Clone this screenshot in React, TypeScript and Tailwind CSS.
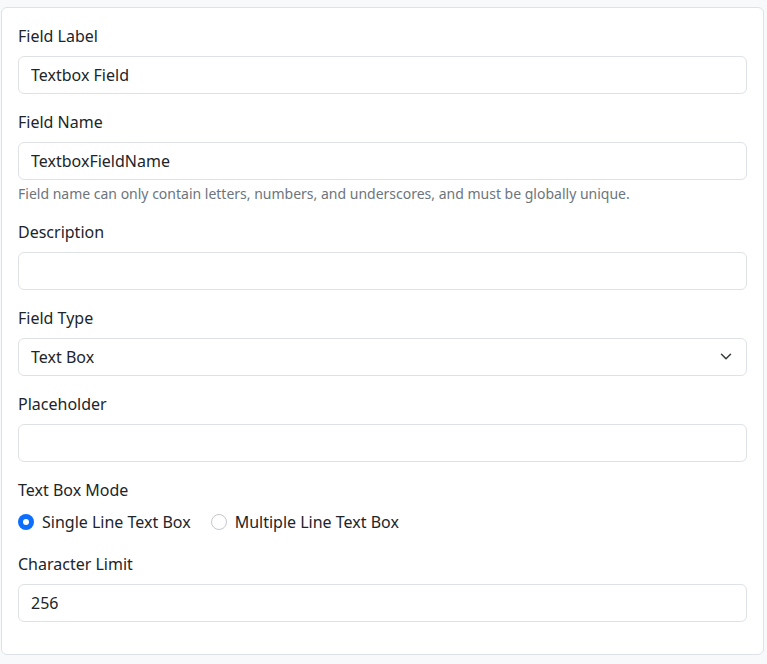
import React, { useState } from 'react';

const inputCls =
  'block w-full h-[38px] px-3 rounded-md border border-[#dee2e6] bg-white text-base leading-6 text-[#212529] outline-none';

const Label: React.FC<{ children: React.ReactNode }> = ({ children }) => (
  <label className="block mb-2 text-base leading-6 text-[#212529]">{children}</label>
);

export default function App() {
  const [mode, setMode] = useState('single');

  return (
    <div
      className="min-h-screen bg-[#f8f9fa] pt-[7px] pl-px pr-[3px] pb-2"
      style={{ fontFamily: '"Noto Sans", "Open Sans", sans-serif' }}
    >
      <div className="bg-white border border-[#dee2e6] rounded-md p-4">
        {/* Field Label */}
        <div className="mb-4">
          <Label>Field Label</Label>
          <input className={inputCls} defaultValue="Textbox Field" />
        </div>

        {/* Field Name */}
        <div className="mb-4">
          <Label>Field Name</Label>
          <input className={inputCls} defaultValue="TextboxFieldName" />
          <div className="mt-1 text-sm leading-5 text-[#6c757d]">
            Field name can only contain letters, numbers, and underscores, and must be globally unique.
          </div>
        </div>

        {/* Description */}
        <div className="mb-4">
          <Label>Description</Label>
          <input className={inputCls} defaultValue="" />
        </div>

        {/* Field Type */}
        <div className="mb-4">
          <Label>Field Type</Label>
          <div className={`${inputCls} flex items-center justify-between`}>
            <span>Text Box</span>
            <svg width="16" height="12" viewBox="0 2 16 12" fill="none">
              <path d="m2 5 6 6 6-6" stroke="#343a40" strokeWidth="2" strokeLinecap="round" strokeLinejoin="round" transform="translate(2 1.5) scale(0.75)" />
            </svg>
          </div>
        </div>

        {/* Placeholder */}
        <div className="mb-4">
          <Label>Placeholder</Label>
          <input className={inputCls} defaultValue="" />
        </div>

        {/* Text Box Mode */}
        <div className="mb-4">
          <Label>Text Box Mode</Label>
          <div className="flex items-start gap-5 h-[26px]">
            {[
              { id: 'single', text: 'Single Line Text Box' },
              { id: 'multi', text: 'Multiple Line Text Box' },
            ].map((o) => (
              <button
                key={o.id}
                onClick={() => setMode(o.id)}
                className="flex items-center gap-2 h-6 text-base leading-6 text-[#212529]"
              >
                {mode === o.id ? (
                  <span className="w-4 h-4 rounded-full bg-[#0d6efd] flex items-center justify-center">
                    <span className="w-1.5 h-1.5 rounded-full bg-white" />
                  </span>
                ) : (
                  <span className="w-4 h-4 rounded-full border border-[#c4c8cc] bg-white" />
                )}
                {o.text}
              </button>
            ))}
          </div>
        </div>

        {/* Character Limit */}
        <div className="mb-4">
          <Label>Character Limit</Label>
          <input className={inputCls} defaultValue="256" />
        </div>
      </div>
    </div>
  );
}
